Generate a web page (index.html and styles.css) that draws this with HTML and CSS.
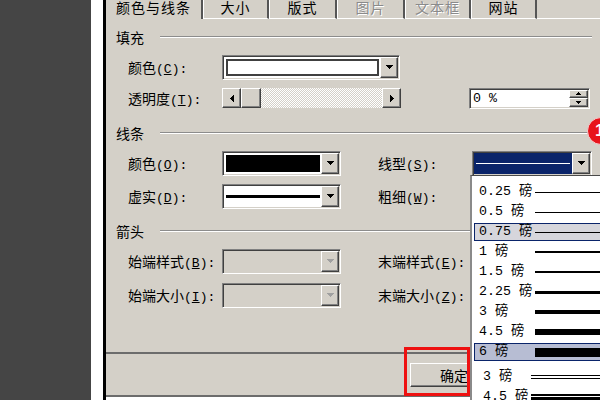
FILE: index.html
```html
<!DOCTYPE html>
<html>

<head>
    <meta charset="utf-8">
    <title>设置自选图形格式</title>
    <link rel="stylesheet" href="styles.css">
</head>

<body>
<div class="desk"></div>
<div class="strip"></div>

<div class="dialog">
    <div class="tabs">
        <div class="tab active">颜色与线条</div>
        <div class="tab w66">大小</div>
        <div class="tab w68">版式</div>
        <div class="tab w68 off">图片</div>
        <div class="tab w66 off">文本框</div>
        <div class="tab w66">网站</div>
        <div class="tab_rest"></div>
    </div>

    <div class="panel">
        <!-- 填充 -->
        <div class="group_title"><span class="gt">填充</span><i class="rule"></i></div>
        <div class="row">
            <span class="lbl">颜色<span class="k">(<u>C</u>):</span></span>
            <div class="combo wide">
                <span class="field"><span class="swatch"></span></span>
                <span class="drop"><svg width="7" height="4" viewBox="0 0 7 4"><path d="M0 0h7v1h-1v1h-1v1h-1v1h-1v-1h-1v-1h-1v-1h-1z"/></svg></span>
            </div>
        </div>
        <div class="row r2">
            <span class="lbl">透明度<span class="k">(<u>T</u>):</span></span>
            <div class="scroll">
                <span class="sbtn"><svg width="4" height="7" viewBox="0 0 4 7"><path d="M3 0h1v7h-1v-1h-1v-1h-1v-1h-1v-1h1v-1h1v-1h1z"/></svg></span>
                <span class="thumb"></span>
                <span class="track"></span>
                <span class="sbtn"><svg width="4" height="7" viewBox="0 0 4 7"><path d="M0 0h1v1h1v1h1v1h1v1h-1v1h-1v1h-1v1h-1z"/></svg></span>
            </div>
            <div class="num">
                <span class="num_val">0 %</span>
                <span class="spin">
                    <span class="spin_btn"><svg width="5" height="3" viewBox="0 0 5 3"><path d="M2 0h1v1h1v1h1v1h-5v-1h1v-1h1z"/></svg></span>
                    <span class="spin_btn"><svg width="5" height="3" viewBox="0 0 5 3"><path d="M0 0h5v1h-1v1h-1v1h-1v-1h-1v-1h-1z"/></svg></span>
                </span>
            </div>
        </div>

        <!-- 线条 -->
        <div class="group_title next"><span class="gt">线条</span><i class="rule"></i></div>
        <div class="row">
            <span class="lbl">颜色<span class="k">(<u>O</u>):</span></span>
            <div class="combo w1">
                <span class="field"><span class="swatch black"></span></span>
                <span class="drop"><svg width="7" height="4" viewBox="0 0 7 4"><path d="M0 0h7v1h-1v1h-1v1h-1v1h-1v-1h-1v-1h-1v-1h-1z"/></svg></span>
            </div>
            <span class="lbl lbl2">线型<span class="k">(<u>S</u>):</span></span>
            <div class="combo w2">
                <span class="field navy"><span class="pen white"></span></span>
                <span class="drop"><svg width="7" height="4" viewBox="0 0 7 4"><path d="M0 0h7v1h-1v1h-1v1h-1v1h-1v-1h-1v-1h-1v-1h-1z"/></svg></span>
            </div>
        </div>
        <div class="row">
            <span class="lbl">虚实<span class="k">(<u>D</u>):</span></span>
            <div class="combo w1">
                <span class="field"><span class="pen"></span></span>
                <span class="drop"><svg width="7" height="4" viewBox="0 0 7 4"><path d="M0 0h7v1h-1v1h-1v1h-1v1h-1v-1h-1v-1h-1v-1h-1z"/></svg></span>
            </div>
            <span class="lbl lbl2">粗细<span class="k">(<u>W</u>):</span></span>
        </div>

        <!-- 箭头 -->
        <div class="group_title next"><span class="gt">箭头</span><i class="rule"></i></div>
        <div class="row">
            <span class="lbl">始端样式<span class="k">(<u>B</u>):</span></span>
            <div class="combo w1 dis">
                <span class="field"></span>
                <span class="drop"><svg width="7" height="4" viewBox="0 0 7 4"><path d="M0 0h7v1h-1v1h-1v1h-1v1h-1v-1h-1v-1h-1v-1h-1z"/></svg></span>
            </div>
            <span class="lbl lbl2">末端样式<span class="k">(<u>E</u>):</span></span>
        </div>
        <div class="row r6">
            <span class="lbl">始端大小<span class="k">(<u>I</u>):</span></span>
            <div class="combo w1 dis">
                <span class="field"></span>
                <span class="drop"><svg width="7" height="4" viewBox="0 0 7 4"><path d="M0 0h7v1h-1v1h-1v1h-1v1h-1v-1h-1v-1h-1v-1h-1z"/></svg></span>
            </div>
            <span class="lbl lbl2">末端大小<span class="k">(<u>Z</u>):</span></span>
        </div>
    </div>

    <div class="footer">
        <div class="btn">确定</div>
    </div>
    <div class="below"></div>
</div>

<div class="mark"></div>
<div class="badge">1</div>

<div class="list">
    <div class="item"><span class="txt">0.25 磅</span><span class="ln" style="height:1px"></span></div>
    <div class="item"><span class="txt">0.5 磅</span><span class="ln" style="height:1px"></span></div>
    <div class="item hover"><span class="txt">0.75 磅</span><span class="ln" style="height:1px"></span></div>
    <div class="item"><span class="txt">1 磅</span><span class="ln" style="height:2px"></span></div>
    <div class="item"><span class="txt">1.5 磅</span><span class="ln" style="height:2px"></span></div>
    <div class="item"><span class="txt">2.25 磅</span><span class="ln" style="height:3px"></span></div>
    <div class="item"><span class="txt">3 磅</span><span class="ln" style="height:4px"></span></div>
    <div class="item"><span class="txt">4.5 磅</span><span class="ln" style="height:6px"></span></div>
    <div class="item sel"><span class="txt">6 磅</span><span class="ln" style="height:9px"></span></div>
    <div class="item dbl first"><span class="txt">3 磅</span><span class="ln double"></span></div>
    <div class="item dbl"><span class="txt">4.5 磅</span><span class="ln triple"></span></div>
</div>
</body>

</html>
```

FILE: styles.css
```css
body {
    margin: 0;
    width: 600px;
    height: 400px;
    overflow: hidden;
    display: flex;
    background-color: #fff;
    font-family: "Noto Sans CJK SC", sans-serif;
    font-size: 14px;
    color: #000;
}

.desk {
    width: 91px;
    height: 400px;
    background-color: #454545;
}

.strip {
    width: 12px;
    height: 400px;
    background-color: #fff;
}

.dialog {
    flex: 1;
    height: 400px;
    display: flex;
    flex-direction: column;
    border-left: 3px solid #000;
    background-color: #d4d0c8;
}

/* tabs */
.tabs {
    display: flex;
    height: 19px;
}

.tab {
    box-sizing: border-box;
    height: 19px;
    line-height: 15px;
    text-align: center;
    letter-spacing: 1px;
    border-left: 1px solid #fff;
    border-right: 2px solid #555;
    border-bottom: 1px solid #fff;
}

.tab.active {
    width: 97px;
    border-left: none;
    border-bottom: none;
}

.w66 {
    width: 66px;
}

.w68 {
    width: 68px;
}

.tab.off {
    color: #8a8a8a;
    text-shadow: 1px 1px #fff;
}

.tab_rest {
    flex: 1;
    border-bottom: 1px solid #fff;
}

/* panel */
.panel {
    box-sizing: border-box;
    height: 335px;
    padding: 8px 8px 0 10px;
    border-bottom: 2px solid #6c6c6c;
}

.group_title {
    display: flex;
    align-items: center;
    height: 20px;
}

.group_title.next {
    margin-top: 12px;
}

.gt {
    width: 44px;
    line-height: 20px;
}

.rule {
    flex: 1;
    border-top: 1px solid #8c8c8c;
    border-bottom: 1px solid #fff;
}

.row {
    display: flex;
    align-items: center;
    height: 26px;
    margin-top: 7px;
    margin-left: 12px;
}

.row.r2 {
    margin-top: 5px;
}

.row.r6 {
    margin-top: 8px;
}

.lbl {
    width: 94px;
    white-space: nowrap;
}

.lbl2 {
    margin-left: 37px;
}

.k {
    font-family: "Liberation Mono", monospace;
    font-size: 13px;
}

/* sunken / raised frames */
.combo,
.num {
    box-sizing: border-box;
    border: 1px solid;
    border-color: #808080 #fff #fff #808080;
    box-shadow: inset 1px 1px #404040, inset -1px -1px #d4d0c8;
    padding: 1px;
    display: flex;
    background-color: #fff;
}

.combo {
    height: 25px;
}

.combo.wide {
    width: 178px;
}

.combo.w1 {
    width: 119px;
}

.combo.w2 {
    width: 120px;
}

.field {
    flex: 1;
    display: flex;
    align-items: center;
    padding: 2px 1px 2px 2px;
}

.swatch {
    align-self: stretch;
    flex: 1;
    border: 2px solid #404040;
    background-color: #fff;
}

.swatch.black {
    border-color: #000;
    background-color: #000;
}

.pen {
    flex: 1;
    height: 3px;
    background-color: #000;
}

.field.navy {
    background-color: #0a246a;
    padding: 0 2px;
}

.pen.white {
    height: 1px;
    background-color: #fff;
}

.drop,
.sbtn,
.thumb,
.spin_btn,
.btn {
    box-sizing: border-box;
    background-color: #d4d0c8;
    border: 1px solid;
    border-color: #fff #404040 #404040 #fff;
    box-shadow: inset -1px -1px #808080;
    display: flex;
    align-items: center;
    justify-content: center;
}

.drop {
    width: 18px;
}

.dis {
    background-color: #d4d0c8;
}

.dis .drop svg {
    fill: #a0a0a0;
}

/* scrollbar */
.scroll {
    display: flex;
    width: 179px;
    height: 20px;
}

.sbtn {
    width: 19px;
}

.thumb {
    width: 20px;
}

.track {
    flex: 1;
    background: repeating-conic-gradient(#fff 0 25%, #d4d0c8 0 50%) 0 0 / 2px 2px;
}

/* percent field */
.num {
    margin-left: 68px;
    width: 121px;
    height: 21px;
}

.num_val {
    flex: 1;
    padding-left: 2px;
    font-family: "Liberation Mono", monospace;
    font-size: 13.3px;
    line-height: 17px;
}

.spin {
    width: 19px;
    display: flex;
    flex-direction: column;
}

.spin_btn {
    flex: 1;
}

/* footer */
.footer {
    box-sizing: border-box;
    height: 43px;
    padding-left: 304px;
    display: flex;
    align-items: center;
    border-bottom: 2px solid #6c6c6c;
}

.btn {
    width: 88px;
    height: 24px;
    font-size: 14px;
}

.below {
    flex: 1;
    background-color: #fff;
}

/* overlays */
.mark {
    position: absolute;
    left: 404px;
    top: 347px;
    width: 66px;
    height: 49px;
    box-sizing: border-box;
    border: 3px solid #ee1111;
}

.badge {
    position: absolute;
    left: 587px;
    top: 117px;
    width: 28px;
    height: 28px;
    box-sizing: border-box;
    border: 1px solid #f4d0d0;
    border-radius: 50%;
    background-color: #e8141b;
    color: #fff;
    font-family: "Liberation Sans", sans-serif;
    font-weight: bold;
    font-size: 17px;
    line-height: 26px;
    padding-left: 7px;
}

.list {
    position: absolute;
    left: 470px;
    top: 175px;
    width: 140px;
    height: 240px;
    box-sizing: border-box;
    display: flex;
    flex-direction: column;
    border-top: 1px solid #4a4a4a;
    border-left: 2px solid #8a8a8a;
    background-color: #fff;
    padding: 6px 0 0 2px;
    font-family: "Liberation Mono", "Noto Sans CJK SC", monospace;
    font-size: 13.3px;
}

.item {
    flex-shrink: 0;
    box-sizing: border-box;
    height: 18px;
    margin: 1px 0;
    padding-left: 4px;
    display: flex;
    align-items: center;
    border: 1px solid transparent;
    border-right: none;
}

.item.hover {
    border-color: #0a246a;
    background-color: #d6d6dc;
}

.item.sel {
    border-color: #0a246a;
    background-color: #b7bdd3;
}

.txt {
    width: 56px;
    white-space: nowrap;
    line-height: 18px;
}

.ln {
    flex: 1;
    background-color: #000;
}

.item.dbl {
    padding-left: 8px;
}

.item.dbl .txt {
    width: 48px;
}

.item.first {
    margin-top: 6px;
}

.ln.double {
    height: 2px;
    background-color: transparent;
    border-top: 1px solid #000;
    border-bottom: 1px solid #000;
}

.ln.triple {
    height: 4px;
    background: linear-gradient(#000 0 1px, transparent 1px 2px, #000 2px 4px);
    border-top: 1px solid #000;
    border-bottom: 1px solid #000;
}
```
